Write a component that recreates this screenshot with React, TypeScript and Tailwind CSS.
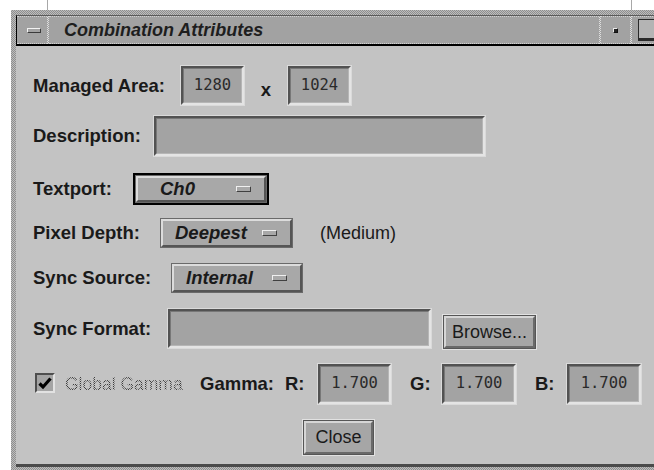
import React from "react";

const sans = "font-['Liberation_Sans',Arial,Helvetica,sans-serif]";
const texture =
  "bg-[image:repeating-conic-gradient(#8e8e8e_0_25%,#bdbdbd_0_50%)] bg-[length:2px_2px]";
const dots =
  "bg-[image:repeating-conic-gradient(#dedede_0_25%,#a2a2a2_0_50%)] bg-[length:2px_2px]";

interface BoxProps {
  className: string;
  children?: React.ReactNode;
}

// sunken motif text field
function Sunken({ className, children }: BoxProps) {
  return (
    <div className={"border border-[#dadada] " + className}>
      <div className="h-full border-2 border-t-[#525252] border-l-[#525252] border-b-[#e4e4e4] border-r-[#e4e4e4]">
        <div className="flex h-full items-center justify-center border border-t-[#777777] border-l-[#777777] border-b-[#b6b6b6] border-r-[#b6b6b6] bg-[#a3a3a3] font-['DejaVu_Sans_Mono',monospace] text-[15.5px] text-[#2a2a2a]">
          {children}
        </div>
      </div>
    </div>
  );
}

function Indicator() {
  return (
    <span className="ml-auto mr-[13px] h-[6px] w-[15px] border border-t-[#f0f0f0] border-l-[#f0f0f0] border-b-[#404040] border-r-[#404040] bg-[#a8a8a8]" />
  );
}

function OptionMenu({ className, inner, label }: { className: string; inner: string; label: string }) {
  return (
    <div className={"border border-[#6a6a6a] " + className}>
      <div
        className={
          "flex h-full items-center border-2 border-t-[#dcdcdc] border-l-[#dcdcdc] border-b-[#555555] border-r-[#555555] bg-[#a8a8a8] " +
          inner
        }
      >
        <span className="text-[18.5px] font-bold italic text-[#1a1a1a]">{label}</span>
        <Indicator />
      </div>
    </div>
  );
}

function PushButton({ className, children }: BoxProps) {
  return (
    <div className={"border border-[#e2e2e2] " + className}>
      <div className="h-full border border-[#565656]">
        <div className="flex h-full items-center justify-center border-2 border-t-[#d6d6d6] border-l-[#d6d6d6] border-b-[#6a6a6a] border-r-[#6a6a6a] bg-[#a6a6a6] text-[18px] text-[#1a1a1a]">
          {children}
        </div>
      </div>
    </div>
  );
}

const label = "text-[18.5px] font-bold text-[#1a1a1a] shrink-0 whitespace-nowrap";

export default function App() {
  return (
    <div className={"relative h-[470px] w-[654px] overflow-hidden bg-white " + sans}>
      <div className="absolute left-[47px] top-0 h-[10px] w-px bg-[#a8a8a8]" />
      <div className="absolute left-[631px] top-0 h-[10px] w-px bg-[#a8a8a8]" />

      <div className="pl-[11px] pt-[10px]">
        <div className={"flex h-[460px] w-[720px] flex-col pl-[5px] pt-[5px] " + texture}>
          {/* title bar */}
          <div className="flex h-[31px] shrink-0 border-b-2 border-l border-t border-black border-t-[#5a5a5a] bg-[#a2a2a2]">
            <div className="flex w-[30px] items-center justify-center border-y border-dotted border-[#d2d2d2]">
              <span className="ml-[4px] h-[5px] w-[14px] border border-t-[#f2f2f2] border-l-[#f2f2f2] border-b-[#3a3a3a] border-r-[#3a3a3a] bg-[#a2a2a2]" />
            </div>
            <div className={"w-[2px] " + dots} />
            <div className="flex w-[550px] items-center border-y border-dotted border-[#d2d2d2] pl-[15px]">
              <span className="text-[18px] font-bold italic text-[#1e1e1e]">Combination Attributes</span>
            </div>
            <div className={"w-[2px] " + dots} />
            <div className="flex w-[29px] items-center justify-center border-y border-dotted border-[#d2d2d2]">
              <span className="h-[5px] w-[5px] border border-t-[#e8e8e8] border-l-[#e8e8e8] border-b-[#111] border-r-[#111] bg-[#222]" />
            </div>
            <div className={"w-[2px] " + dots} />
            <div className="flex flex-1 items-center border-y border-dotted border-[#d2d2d2] pl-[6px]">
              <span className="h-[22px] w-[40px] border border-b-[3px] border-r-[3px] border-[#2a2a2a] bg-[#b4b4b4]" />
            </div>
          </div>

          {/* content */}
          <div className="h-[421px] shrink-0 border-b-[3px] border-[#4a4a4a] bg-[#c3c3c3] pl-[17px]">
            <div className="mt-[19px] flex h-[41px] items-center">
              <span className={label + " w-[147px]"}>Managed Area:</span>
              <Sunken className="h-[41px] w-[65px]">1280</Sunken>
              <span className={label + " w-[42px] pt-[8px] text-center"}>x</span>
              <Sunken className="h-[41px] w-[65px]">1024</Sunken>
            </div>

            <div className="mt-[9px] flex h-[42px] items-center">
              <span className={label + " w-[120px]"}>Description:</span>
              <Sunken className="h-[42px] w-[333px]" />
            </div>

            <div className="mt-[16px] flex h-[32px] items-center">
              <span className={label + " w-[100px]"}>Textport:</span>
              <div className="h-[32px] w-[136px] border-2 border-black">
                <OptionMenu className="h-full w-full" inner="pl-[22px]" label="Ch0" />
              </div>
            </div>

            <div className="mt-[13px] flex h-[30px] items-center">
              <span className={label + " w-[127px]"}>Pixel Depth:</span>
              <OptionMenu className="h-[30px] w-[133px]" inner="pl-[12px]" label="Deepest" />
              <span className="ml-[27px] text-[18px] text-[#1a1a1a]">(Medium)</span>
            </div>

            <div className="mt-[15px] flex h-[30px] items-center">
              <span className={label + " w-[138px]"}>Sync Source:</span>
              <OptionMenu className="h-[30px] w-[132px]" inner="pl-[12px]" label="Internal" />
            </div>

            <div className="mt-[15px] flex h-[42px] items-start">
              <span className={label + " w-[134px] self-center"}>Sync Format:</span>
              <Sunken className="h-[41px] w-[265px]" />
              <PushButton className="ml-[10px] mt-[6px] h-[36px] w-[95px]">Browse...</PushButton>
            </div>

            <div className="mt-[13px] flex h-[42px] items-center">
              <div className="ml-[2px] mb-[3px] h-[20px] w-[20px] shrink-0 border-2 border-t-[#4e4e4e] border-l-[#4e4e4e] border-b-[#e2e2e2] border-r-[#e2e2e2] bg-[#a4a4a4]">
                <svg viewBox="0 0 16 16" className="block h-full w-full">
                  <path d="M2.5 8.5 L6 12 L13.5 3.5" fill="none" stroke="#000" strokeWidth="3.2" strokeLinejoin="miter" />
                </svg>
              </div>
              <span className="ml-[10px] w-[118px] shrink-0 whitespace-nowrap bg-[image:repeating-conic-gradient(#3c3c3c_0_25%,transparent_0_50%)] bg-[length:2px_2px] bg-clip-text text-[17.5px] text-transparent">
                Global Gamma
              </span>
              <span className={label + " ml-[17px] w-[85px]"}>Gamma:</span>
              <span className={label + " w-[32px]"}>R:</span>
              <Sunken className="h-[42px] w-[75px]">1.700</Sunken>
              <span className={label + " w-[49px] pl-[18px]"}>G:</span>
              <Sunken className="h-[42px] w-[76px]">1.700</Sunken>
              <span className={label + " w-[49px] pl-[18px]"}>B:</span>
              <Sunken className="h-[42px] w-[76px]">1.700</Sunken>
            </div>

            <div className="mt-[14px] flex h-[37px] items-center">
              <PushButton className="ml-[269px] h-[37px] w-[73px]">Close</PushButton>
            </div>
          </div>
        </div>
      </div>
    </div>
  );
}
